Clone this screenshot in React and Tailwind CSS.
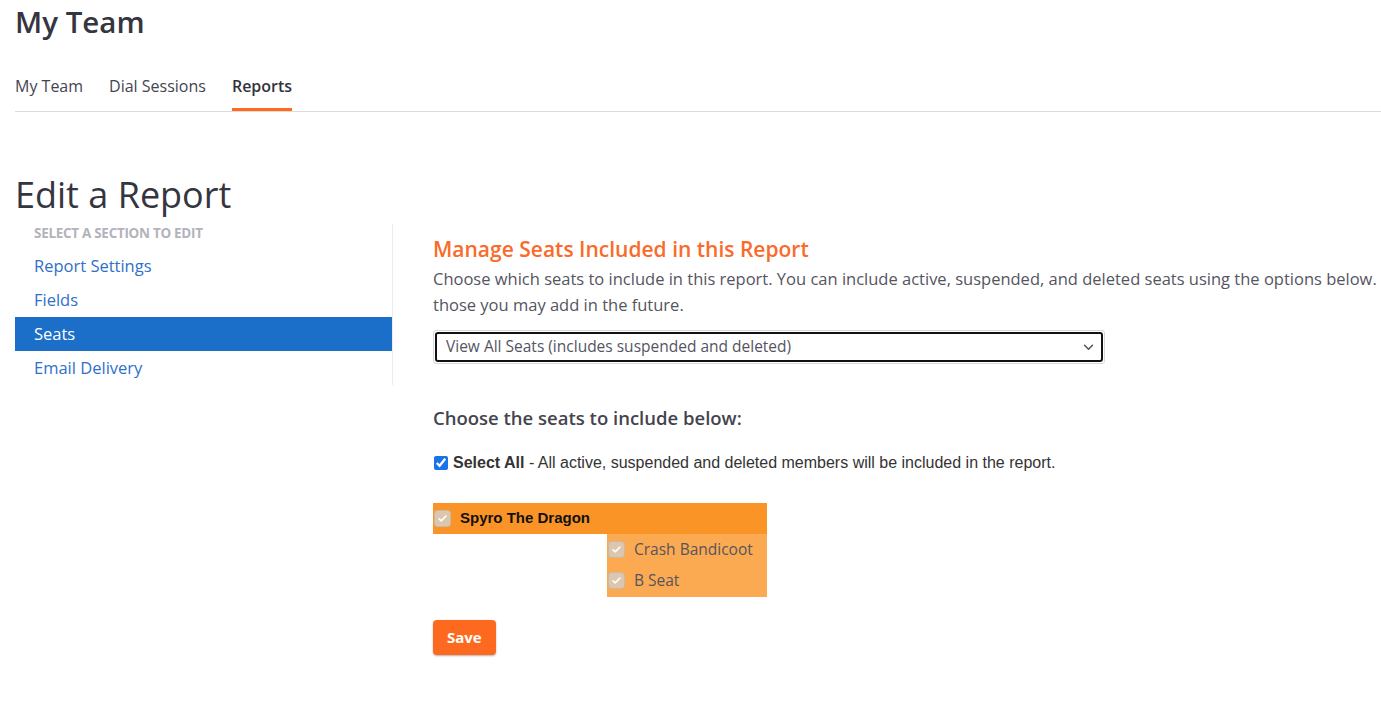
import React, { useState } from "react";

const font = { fontFamily: "'Open Sans', 'Noto Sans', sans-serif" };
const arial = { fontFamily: "'Liberation Sans', Arial, sans-serif" };

/* disabled, already-checked seat box */
function MutedCheck() {
  return (
    <span className="inline-flex items-center justify-center w-[15px] h-[15px] rounded-[3px] bg-[#dcc6ae] ring-1 ring-[#cdb8a2]">
      <svg viewBox="0 0 16 16" className="w-[11px] h-[11px]">
        <path d="M3 8.5l3 3 7-7" fill="none" stroke="#fff" strokeWidth="2.2" strokeLinecap="round" strokeLinejoin="round" />
      </svg>
    </span>
  );
}

const sections = ["Report Settings", "Fields", "Seats", "Email Delivery"];

export default function App() {
  const [active, setActive] = useState("Seats");
  const [all, setAll] = useState(true);

  return (
    <div className="w-[1381px] h-[705px] overflow-hidden bg-white text-[#3b3b45]" style={font}>
      <div className="pl-[15px]">
        <h1 className="pt-[4px] text-[29.5px] leading-[36px] font-semibold text-[#35353f]">My Team</h1>

        <nav className="mt-[32px] flex gap-[26px] border-b border-[#dcdcdc] text-[16px]">
          <a className="pb-[13px] pt-[2px] text-[#444450]">My Team</a>
          <a className="pb-[13px] pt-[2px] text-[#444450]">Dial Sessions</a>
          <a className="pb-[10px] pt-[2px] font-semibold text-[#33333d] border-b-[3px] border-[#fe6a1e]">Reports</a>
        </nav>

        <h2 className="mt-[63px] text-[36px] leading-[40px] font-medium text-[#35353f]">Edit a Report</h2>

        <div className="flex mt-[9px]">
          <aside className="w-[378px] shrink-0 border-r border-[#ececec] h-[161px]">
            <div className="pl-[19px] pt-[2px] h-[25px] text-[13.5px] leading-[14px] font-bold uppercase text-[#b3b3bc] tracking-[-0.3px]">
              Select a section to edit
            </div>
            {sections.map((s) => (
              <button
                key={s}
                onClick={() => setActive(s)}
                className={`block w-full text-left pl-[19px] h-[34px] text-[16.5px] ${
                  active === s ? "bg-[#1b6fc8] text-white" : "text-[#2f70c8]"
                }`}
              >
                {s}
              </button>
            ))}
          </aside>

          <main className="pl-[40px] pt-[9px] flex-1 min-w-0">
            <h3 className="text-[21px] leading-[32px] font-semibold text-[#fa6b2b]">
              Manage Seats Included in this Report
            </h3>
            <p className="mt-[1px] whitespace-nowrap text-[16.5px] leading-[26px] text-[#55555f]">
              Choose which seats to include in this report. You can include active, suspended, and deleted seats using the options below.
            </p>
            <p className="text-[16.5px] leading-[26px] text-[#55555f]">those you may add in the future.</p>

            <div className="mt-[12px] w-[672px] rounded-[3px] border border-[#d7d7d7] p-[1px]">
              <div className="relative h-[30px] rounded-[3px] border-2 border-[#111]">
                <select className="w-full h-full appearance-none bg-transparent pl-[9px] text-[15.5px] text-[#55555f] outline-none" defaultValue="all">
                  <option value="all">View All Seats (includes suspended and deleted)</option>
                  <option value="active">View Active Seats</option>
                </select>
                <svg viewBox="0 0 12 8" className="absolute right-[7px] top-[10px] w-[11px] h-[7px] pointer-events-none">
                  <path d="M1.5 1.5L6 6l4.5-4.5" fill="none" stroke="#555" strokeWidth="1.8" strokeLinecap="round" strokeLinejoin="round" />
                </svg>
              </div>
            </div>

            <h4 className="mt-[42px] text-[18.5px] leading-[24px] font-semibold text-[#44444e]">
              Choose the seats to include below:
            </h4>

            <label className="mt-[23px] flex items-center gap-[5px] text-[16px] leading-[20px] text-[#333]" style={arial}>
              <input
                type="checkbox"
                checked={all}
                onChange={(e) => setAll(e.target.checked)}
                className="w-[14px] h-[14px] m-0 ml-[1px] accent-[#1a73e8]"
              />
              <span>
                <b>Select All</b> - All active, suspended and deleted members will be included in the report.
              </span>
            </label>

            <div className="mt-[30px] w-[334px]">
              <div className="h-[31px] bg-[#fb9426] flex items-center gap-[10px] pl-[2px]">
                <MutedCheck />
                <span className="text-[15px] font-bold text-[#111]" style={arial}>
                  Spyro The Dragon
                </span>
              </div>
              <div className="ml-[174px] bg-[#fbaa52] pb-[1px]">
                {["Crash Bandicoot", "B Seat"].map((n) => (
                  <div key={n} className="h-[31px] flex items-center gap-[10px] pl-[2px]">
                    <MutedCheck />
                    <span className="text-[15.5px] text-[#55555f]">{n}</span>
                  </div>
                ))}
              </div>
            </div>

            <button className="mt-[23px] h-[35px] px-[14px] rounded-[4px] bg-[#fd6a1f] text-white text-[15px] font-bold shadow-[0_1px_2px_rgba(0,0,0,0.3)]">
              Save
            </button>
          </main>
        </div>
      </div>
    </div>
  );
}
